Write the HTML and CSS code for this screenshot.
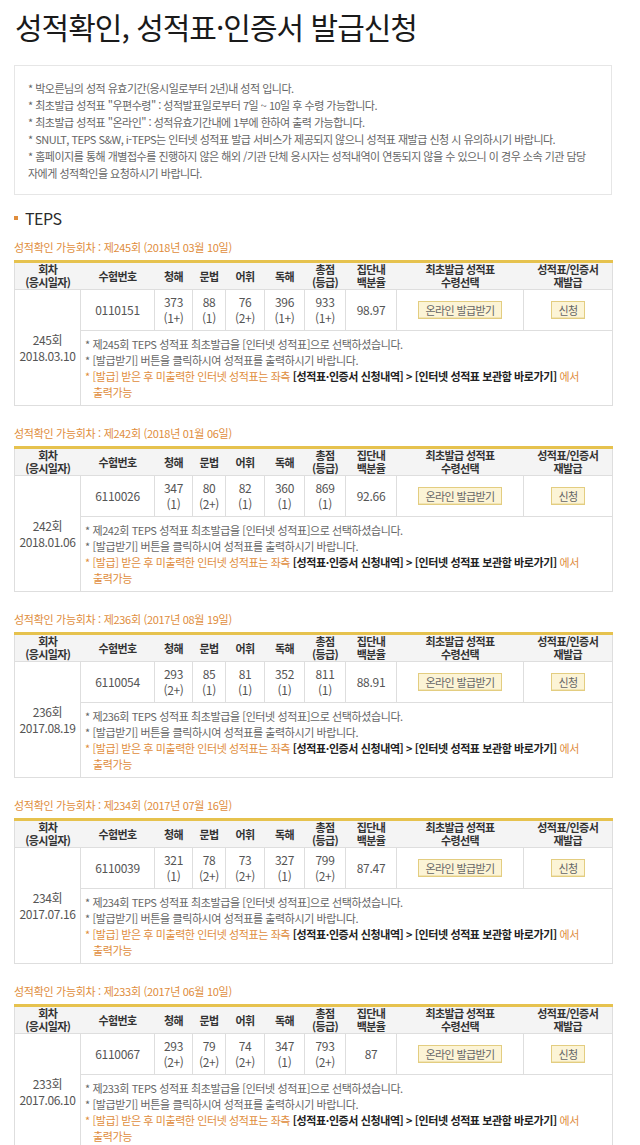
FILE: index.html
```html
<!DOCTYPE html>
<html lang="ko">
<head>
    <meta charset="UTF-8">
    <meta name="viewport" content="width=device-width, initial-scale=1.0">
    <title>성적확인, 성적표·인증서 발급신청</title>
    <link rel="stylesheet" href="styles.css">
</head>
<body>
    <div class="page">
        <h1 class="page-title">성적확인, 성적표·인증서 발급신청</h1>

        <div class="info-box">
            <p>* 박오른님의 성적 유효기간(응시일로부터 2년)내 성적 입니다.</p>
            <p>* 최초발급 성적표 "우편수령" : 성적발표일로부터 7일 ~ 10일 후 수령 가능합니다.</p>
            <p>* 최초발급 성적표 "온라인" : 성적유효기간내에 1부에 한하여 출력 가능합니다.</p>
            <p>* SNULT, TEPS S&amp;W, i-TEPS는 인터넷 성적표 발급 서비스가 제공되지 않으니 성적표 재발급 신청 시 유의하시기 바랍니다.</p>
            <p>* 홈페이지를 통해 개별접수를 진행하지 않은 해외 /기관 단체 응시자는 성적내역이 연동되지 않을 수 있으니 이 경우 소속 기관 담당자에게 성적확인을 요청하시기 바랍니다.</p>
        </div>

        <h2 class="section-title"><span class="dot"></span>TEPS</h2>

        <!-- 245회 -->
        <p class="round-label">성적확인 가능회차 : 제245회 (2018년 03월 10일)</p>
        <table class="score-table">
            <colgroup>
                <col class="c-round"><col class="c-num"><col class="c-s1"><col class="c-s2"><col class="c-s3"><col class="c-s4"><col class="c-total"><col class="c-pct"><col class="c-issue"><col class="c-re">
            </colgroup>
            <thead>
                <tr>
                    <th>회차<br>(응시일자)</th><th>수험번호</th><th>청해</th><th>문법</th><th>어휘</th><th>독해</th><th>총점<br>(등급)</th><th>집단내<br>백분율</th><th>최초발급 성적표<br>수령선택</th><th>성적표/인증서<br>재발급</th>
                </tr>
            </thead>
            <tbody>
                <tr class="score-row">
                    <td rowspan="2" class="round-cell">245회<br>2018.03.10</td>
                    <td>0110151</td><td>373<br>(1+)</td><td>88<br>(1)</td><td>76<br>(2+)</td><td>396<br>(1+)</td><td>933<br>(1+)</td><td>98.97</td>
                    <td><button class="btn-yellow">온라인 발급받기</button></td>
                    <td><button class="btn-yellow">신청</button></td>
                </tr>
                <tr>
                    <td colspan="9" class="notes">
                        <ul>
                            <li>* 제245회 TEPS 성적표 최초발급을 [인터넷 성적표]으로 선택하셨습니다.</li>
                            <li>* [발급받기] 버튼을 클릭하시여 성적표를 출력하시기 바랍니다.</li>
                            <li class="orange">* [발급] 받은 후 미출력한 인터넷 성적표는 좌측 <b>[성적표·인증서 신청내역] &gt; [인터넷 성적표 보관함 바로가기]</b> 에서 출력가능</li>
                        </ul>
                    </td>
                </tr>
            </tbody>
        </table>

        <!-- 242회 -->
        <p class="round-label">성적확인 가능회차 : 제242회 (2018년 01월 06일)</p>
        <table class="score-table">
            <colgroup>
                <col class="c-round"><col class="c-num"><col class="c-s1"><col class="c-s2"><col class="c-s3"><col class="c-s4"><col class="c-total"><col class="c-pct"><col class="c-issue"><col class="c-re">
            </colgroup>
            <thead>
                <tr>
                    <th>회차<br>(응시일자)</th><th>수험번호</th><th>청해</th><th>문법</th><th>어휘</th><th>독해</th><th>총점<br>(등급)</th><th>집단내<br>백분율</th><th>최초발급 성적표<br>수령선택</th><th>성적표/인증서<br>재발급</th>
                </tr>
            </thead>
            <tbody>
                <tr class="score-row">
                    <td rowspan="2" class="round-cell">242회<br>2018.01.06</td>
                    <td>6110026</td><td>347<br>(1)</td><td>80<br>(2+)</td><td>82<br>(1)</td><td>360<br>(1)</td><td>869<br>(1)</td><td>92.66</td>
                    <td><button class="btn-yellow">온라인 발급받기</button></td>
                    <td><button class="btn-yellow">신청</button></td>
                </tr>
                <tr>
                    <td colspan="9" class="notes">
                        <ul>
                            <li>* 제242회 TEPS 성적표 최초발급을 [인터넷 성적표]으로 선택하셨습니다.</li>
                            <li>* [발급받기] 버튼을 클릭하시여 성적표를 출력하시기 바랍니다.</li>
                            <li class="orange">* [발급] 받은 후 미출력한 인터넷 성적표는 좌측 <b>[성적표·인증서 신청내역] &gt; [인터넷 성적표 보관함 바로가기]</b> 에서 출력가능</li>
                        </ul>
                    </td>
                </tr>
            </tbody>
        </table>

        <!-- 236회 -->
        <p class="round-label">성적확인 가능회차 : 제236회 (2017년 08월 19일)</p>
        <table class="score-table">
            <colgroup>
                <col class="c-round"><col class="c-num"><col class="c-s1"><col class="c-s2"><col class="c-s3"><col class="c-s4"><col class="c-total"><col class="c-pct"><col class="c-issue"><col class="c-re">
            </colgroup>
            <thead>
                <tr>
                    <th>회차<br>(응시일자)</th><th>수험번호</th><th>청해</th><th>문법</th><th>어휘</th><th>독해</th><th>총점<br>(등급)</th><th>집단내<br>백분율</th><th>최초발급 성적표<br>수령선택</th><th>성적표/인증서<br>재발급</th>
                </tr>
            </thead>
            <tbody>
                <tr class="score-row">
                    <td rowspan="2" class="round-cell">236회<br>2017.08.19</td>
                    <td>6110054</td><td>293<br>(2+)</td><td>85<br>(1)</td><td>81<br>(1)</td><td>352<br>(1)</td><td>811<br>(1)</td><td>88.91</td>
                    <td><button class="btn-yellow">온라인 발급받기</button></td>
                    <td><button class="btn-yellow">신청</button></td>
                </tr>
                <tr>
                    <td colspan="9" class="notes">
                        <ul>
                            <li>* 제236회 TEPS 성적표 최초발급을 [인터넷 성적표]으로 선택하셨습니다.</li>
                            <li>* [발급받기] 버튼을 클릭하시여 성적표를 출력하시기 바랍니다.</li>
                            <li class="orange">* [발급] 받은 후 미출력한 인터넷 성적표는 좌측 <b>[성적표·인증서 신청내역] &gt; [인터넷 성적표 보관함 바로가기]</b> 에서 출력가능</li>
                        </ul>
                    </td>
                </tr>
            </tbody>
        </table>

        <!-- 234회 -->
        <p class="round-label">성적확인 가능회차 : 제234회 (2017년 07월 16일)</p>
        <table class="score-table">
            <colgroup>
                <col class="c-round"><col class="c-num"><col class="c-s1"><col class="c-s2"><col class="c-s3"><col class="c-s4"><col class="c-total"><col class="c-pct"><col class="c-issue"><col class="c-re">
            </colgroup>
            <thead>
                <tr>
                    <th>회차<br>(응시일자)</th><th>수험번호</th><th>청해</th><th>문법</th><th>어휘</th><th>독해</th><th>총점<br>(등급)</th><th>집단내<br>백분율</th><th>최초발급 성적표<br>수령선택</th><th>성적표/인증서<br>재발급</th>
                </tr>
            </thead>
            <tbody>
                <tr class="score-row">
                    <td rowspan="2" class="round-cell">234회<br>2017.07.16</td>
                    <td>6110039</td><td>321<br>(1)</td><td>78<br>(2+)</td><td>73<br>(2+)</td><td>327<br>(1)</td><td>799<br>(2+)</td><td>87.47</td>
                    <td><button class="btn-yellow">온라인 발급받기</button></td>
                    <td><button class="btn-yellow">신청</button></td>
                </tr>
                <tr>
                    <td colspan="9" class="notes">
                        <ul>
                            <li>* 제234회 TEPS 성적표 최초발급을 [인터넷 성적표]으로 선택하셨습니다.</li>
                            <li>* [발급받기] 버튼을 클릭하시여 성적표를 출력하시기 바랍니다.</li>
                            <li class="orange">* [발급] 받은 후 미출력한 인터넷 성적표는 좌측 <b>[성적표·인증서 신청내역] &gt; [인터넷 성적표 보관함 바로가기]</b> 에서 출력가능</li>
                        </ul>
                    </td>
                </tr>
            </tbody>
        </table>

        <!-- 233회 -->
        <p class="round-label">성적확인 가능회차 : 제233회 (2017년 06월 10일)</p>
        <table class="score-table">
            <colgroup>
                <col class="c-round"><col class="c-num"><col class="c-s1"><col class="c-s2"><col class="c-s3"><col class="c-s4"><col class="c-total"><col class="c-pct"><col class="c-issue"><col class="c-re">
            </colgroup>
            <thead>
                <tr>
                    <th>회차<br>(응시일자)</th><th>수험번호</th><th>청해</th><th>문법</th><th>어휘</th><th>독해</th><th>총점<br>(등급)</th><th>집단내<br>백분율</th><th>최초발급 성적표<br>수령선택</th><th>성적표/인증서<br>재발급</th>
                </tr>
            </thead>
            <tbody>
                <tr class="score-row">
                    <td rowspan="2" class="round-cell">233회<br>2017.06.10</td>
                    <td>6110067</td><td>293<br>(2+)</td><td>79<br>(2+)</td><td>74<br>(2+)</td><td>347<br>(1)</td><td>793<br>(2+)</td><td>87</td>
                    <td><button class="btn-yellow">온라인 발급받기</button></td>
                    <td><button class="btn-yellow">신청</button></td>
                </tr>
                <tr>
                    <td colspan="9" class="notes">
                        <ul>
                            <li>* 제233회 TEPS 성적표 최초발급을 [인터넷 성적표]으로 선택하셨습니다.</li>
                            <li>* [발급받기] 버튼을 클릭하시여 성적표를 출력하시기 바랍니다.</li>
                            <li class="orange">* [발급] 받은 후 미출력한 인터넷 성적표는 좌측 <b>[성적표·인증서 신청내역] &gt; [인터넷 성적표 보관함 바로가기]</b> 에서 출력가능</li>
                        </ul>
                    </td>
                </tr>
            </tbody>
        </table>
    </div>
</body>
</html>
```

FILE: styles.css
```css
:root {
    --gold: #e6c24e;
    --orange: #e08d3c;
    --line: #dedede;
    --text: #666;
    --dark: #2b2b2b;
}
body, html { margin: 0; padding: 0; background: #fff; font-family: "Noto Sans CJK KR", "Noto Sans", sans-serif; color: var(--text); }
.page { width: 598px; padding: 0 14px 40px 14px; }
.page-title { margin: 8px 0 0 1px; font-size: 30px; line-height: 36px; font-weight: normal; color: #1a1a1a; letter-spacing: -1px; }

.info-box { margin-top: 21px; border: 1px solid #e6e6e6; padding: 14px 18px 12px 13px; font-size: 11px; line-height: 17px; letter-spacing: -0.5px; color: #666; }
.info-box p { margin: 0; }

.section-title { margin: 12px 0 0; font-size: 16px; line-height: 22px; font-weight: normal; color: var(--dark); letter-spacing: -0.5px; display: flex; align-items: center; }
.section-title .dot { width: 4px; height: 4px; background: var(--orange); margin: 0 7px 0 0; }

.round-label { margin: 10px 0 5px; font-size: 11px; line-height: 16px; color: var(--orange); letter-spacing: -0.3px; }

.score-table { width: 598px; table-layout: fixed; border-collapse: collapse; border-top: 3px solid var(--gold); border-left: 1px solid var(--line); border-right: 1px solid var(--line); border-bottom: 1px solid var(--line); margin-bottom: 19px; font-size: 11px; letter-spacing: -0.6px; }
.c-round { width: 66px; }
.c-num { width: 74px; }
.c-s1 { width: 38px; }
.c-s2 { width: 33px; }
.c-s3 { width: 39px; }
.c-s4 { width: 40px; }
.c-total { width: 41px; }
.c-pct { width: 51px; }
.c-issue { width: 127px; }
.c-re { width: 89px; }
.score-table th { background: #f4f4f4; color: #333; font-weight: bold; line-height: 13px; height: 26px; padding: 0; text-align: center; border-bottom: 1px solid var(--line); }
.score-table td { text-align: center; color: #555; border: 1px solid var(--line); }
.score-row td { line-height: 16px; padding: 4px 0; }
.round-cell { line-height: 17px; font-size: 12px; letter-spacing: -0.4px; }
.score-row td:not(.round-cell) { font-size: 12px; letter-spacing: -0.3px; }

.btn-yellow { height: 18px; padding: 0 6px; background: #fcf4d6; border: 1px solid #e3cd80; box-shadow: inset 0 -1px 0 #f1e4b4; color: #666; font-family: inherit; font-size: 11px; letter-spacing: -0.6px; line-height: 16px; cursor: pointer; }

.notes { text-align: left !important; padding: 5px 8px 5px 4px; word-break: keep-all; letter-spacing: -0.4px; }
.notes ul { list-style: none; margin: 0; padding: 0 0 0 8px; }
.notes li { line-height: 16px; text-indent: -8px; color: #666; }
.notes li.orange { color: var(--orange); }
.notes li b { color: #222; }
```
